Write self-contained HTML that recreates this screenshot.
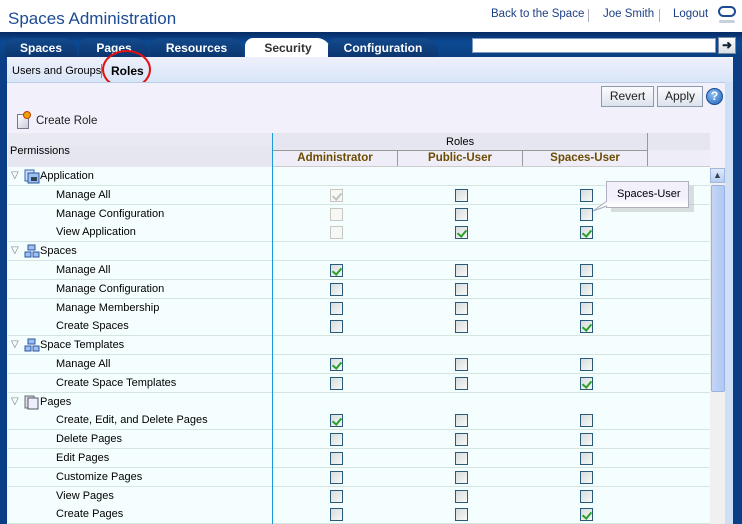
<!DOCTYPE html>
<html><head><meta charset="utf-8"><style>
*{margin:0;padding:0;box-sizing:border-box}
body{width:742px;height:524px;overflow:hidden;position:relative;background:#fff;font-family:"Liberation Sans",Tahoma,sans-serif;font-size:11px;color:#000}
.a{position:absolute}
.title{left:8px;top:9px;font-size:17px;color:#1c4b95}
.toplinks{top:8px;font-size:11.5px;color:#1c3f85}
.tabbar{left:0;top:32px;width:742px;height:25px;background:linear-gradient(#062c62,#0c4a94 40%,#0a3f80)}
.tab{top:38px;height:19px;background:linear-gradient(#134a8c,#0b3670);color:#fff;font-weight:bold;font-size:12px;text-align:center;line-height:20px;border-radius:8px 14px 0 0}
.tab.sel{background:#fff;color:#333}
.side{top:57px;height:467px;background:#0a3f88}
.sub{left:7px;top:57px;width:726px;height:25px;background:linear-gradient(#eef0fb,#d8e6f8);border-top-right-radius:6px}
.content{left:7px;top:82px;width:726px;height:442px;background:#f1f0fb;border-top:1px solid #b9cde6}
.btn{top:86px;height:21px;border:1px solid #8a9bb0;background:linear-gradient(#fafbfd,#dde3ec);font-size:12px;text-align:center;line-height:19px;color:#222}
.thead{left:8px;top:133px;width:702px;height:34px;background:#e6e6f0}
.row{left:8px;width:702px;height:19px;background:#f5fefe;border-bottom:1px solid #d4e4df;font-size:11px;line-height:18px}
.cb{width:13px;height:13px;border:1px solid #2a5a7a;background:linear-gradient(135deg,#d8dcdc,#f8f8f8)}
.cb.d{border-color:#c8c8c0;background:#f6f8f6}
.ck::after{content:"";position:absolute;left:3px;top:1px;width:4px;height:7px;border:solid #2aa02a;border-width:0 2px 2px 0;transform:rotate(40deg)}
.ck.d::after{border-color:#c0c4c0}
.tri{color:#777;font-size:10px}
</style></head><body>
<div class="a title">Spaces Administration</div>
<div class="a toplinks" style="left:491px">Back to the Space</div>
<div class="a" style="left:588px;top:9px;width:1px;height:13px;background:#aab"></div>
<div class="a toplinks" style="left:603px">Joe Smith</div>
<div class="a" style="left:659px;top:9px;width:1px;height:13px;background:#aab"></div>
<div class="a toplinks" style="left:673px">Logout</div>
<div class="a" style="left:718px;top:6px;width:18px;height:11px;border:2.5px solid #1c4b95;border-radius:8px"></div>
<div class="a" style="left:719px;top:20px;width:16px;height:3px;background:#c8d0e0;border-radius:3px"></div>

<div class="a tabbar"></div>
<div class="a tab" style="left:5px;width:72px">Spaces</div>
<div class="a tab" style="left:79px;width:70px">Pages</div>
<div class="a tab" style="left:150px;width:93px">Resources</div>
<div class="a tab sel" style="left:245px;width:86px">Security</div>
<div class="a tab" style="left:328px;width:110px">Configuration</div>
<div class="a" style="left:472px;top:38px;width:244px;height:15px;background:#fff;border:1px solid #7e9ac0"></div>
<div class="a" style="left:718px;top:37px;width:18px;height:17px;background:linear-gradient(#fff,#d8dde6);border:1px solid #7a8aa0;font-size:12px;font-weight:bold;text-align:center;line-height:14px;color:#123">➜</div>

<div class="a side" style="left:0;width:7px"></div>
<div class="a side" style="left:733px;width:9px"></div>
<div class="a sub"></div>
<div class="a" style="left:12px;top:65px;font-size:11px">Users and Groups</div>
<div class="a" style="left:101px;top:64px;width:1px;height:14px;background:#888"></div>
<div class="a" style="left:111px;top:64px;font-size:12px;font-weight:bold">Roles</div>
<div class="a" style="left:102px;top:50px;width:49px;height:39px;border:2px solid #e41010;border-radius:50%"></div>
<div class="a content"></div>
<div class="a" style="left:725px;top:82px;width:8px;height:442px;background:#cfdff5"></div>

<div class="a btn" style="left:601px;width:53px">Revert</div>
<div class="a btn" style="left:657px;width:46px">Apply</div>
<div class="a" style="left:706px;top:88px;width:17px;height:17px;border-radius:50%;background:radial-gradient(circle at 40% 35%,#8cc0f0,#1d62c0);border:1px solid #1a4a90;color:#fff;font-weight:bold;font-size:12px;text-align:center;line-height:15px">?</div>

<div class="a" style="left:17px;top:114px;width:12px;height:15px;border:1px solid #778;background:linear-gradient(135deg,#fff,#ccd)"></div>
<div class="a" style="left:23px;top:111px;width:8px;height:8px;border-radius:50%;background:#f0a000;border:1px solid #c04000"></div>
<div class="a" style="left:36px;top:115px;font-size:11.5px;color:#222">Create Role</div>

<div class="a thead"></div>
<div class="a" style="left:8px;top:133px;width:264px;height:13px;background:#e9e9f1"></div>
<div class="a" style="left:10px;top:145px;font-size:11px">Permissions</div>
<div class="a" style="left:272px;top:133px;width:1px;height:391px;background:#1a9ad8;z-index:3"></div>
<div class="a" style="left:273px;top:150px;width:437px;height:17px;background:#efeef8"></div>
<div class="a" style="left:273px;top:150px;width:374px;height:1px;background:#999"></div>
<div class="a" style="left:647px;top:133px;width:1px;height:34px;background:#999"></div>
<div class="a" style="left:397px;top:151px;width:1px;height:16px;background:#999"></div>
<div class="a" style="left:522px;top:151px;width:1px;height:16px;background:#999"></div>
<div class="a" style="left:273px;top:166px;width:437px;height:1px;background:#ccc"></div>
<div class="a" style="left:446px;top:136px;font-size:11px">Roles</div>
<div class="a" style="left:273px;top:152px;width:124px;text-align:center;font-weight:bold;color:#6b4c00;font-size:11.5px">Administrator</div>
<div class="a" style="left:398px;top:152px;width:124px;text-align:center;font-weight:bold;color:#6b4c00;font-size:11.5px">Public-User</div>
<div class="a" style="left:523px;top:152px;width:124px;text-align:center;font-weight:bold;color:#6b4c00;font-size:11.5px">Spaces-User</div>

<div class="a" style="left:8px;top:167px;width:702px;height:357px;overflow:hidden">
<div style="position:relative">
<div class="a row" style="left:0;top:0px"><span class="a tri" style="left:3px">▽</span><svg class="a" style="left:16px;top:2px" width="16" height="15"><rect x="1" y="1" width="9" height="11" fill="#cfe0ff" stroke="#3a64b0"/><rect x="4" y="4" width="11" height="10" fill="#9ec0f0" stroke="#2a54a0"/><rect x="7" y="8" width="6" height="4" fill="#345"/></svg><span class="a" style="left:32px">Application</span></div>
<div class="a row" style="left:0;top:18.8px"><span class="a" style="left:48px">Manage All</span><span class="a cb d ck" style="left:322px;top:3px"></span><span class="a cb" style="left:447px;top:3px"></span><span class="a cb" style="left:572px;top:3px"></span></div>
<div class="a row" style="left:0;top:37.6px"><span class="a" style="left:48px">Manage Configuration</span><span class="a cb d" style="left:322px;top:3px"></span><span class="a cb" style="left:447px;top:3px"></span><span class="a cb" style="left:572px;top:3px"></span></div>
<div class="a row" style="left:0;top:56.4px"><span class="a" style="left:48px">View Application</span><span class="a cb d" style="left:322px;top:3px"></span><span class="a cb ck" style="left:447px;top:3px"></span><span class="a cb ck" style="left:572px;top:3px"></span></div>
<div class="a row" style="left:0;top:75.2px"><span class="a tri" style="left:3px">▽</span><svg class="a" style="left:16px;top:2px" width="16" height="15"><rect x="4" y="1" width="7" height="5" fill="#9ec0f0" stroke="#2a54a0"/><rect x="1" y="8" width="6" height="5" fill="#9ec0f0" stroke="#2a54a0"/><rect x="9" y="8" width="6" height="5" fill="#9ec0f0" stroke="#2a54a0"/></svg><span class="a" style="left:32px">Spaces</span></div>
<div class="a row" style="left:0;top:94px"><span class="a" style="left:48px">Manage All</span><span class="a cb ck" style="left:322px;top:3px"></span><span class="a cb" style="left:447px;top:3px"></span><span class="a cb" style="left:572px;top:3px"></span></div>
<div class="a row" style="left:0;top:112.8px"><span class="a" style="left:48px">Manage Configuration</span><span class="a cb" style="left:322px;top:3px"></span><span class="a cb" style="left:447px;top:3px"></span><span class="a cb" style="left:572px;top:3px"></span></div>
<div class="a row" style="left:0;top:131.6px"><span class="a" style="left:48px">Manage Membership</span><span class="a cb" style="left:322px;top:3px"></span><span class="a cb" style="left:447px;top:3px"></span><span class="a cb" style="left:572px;top:3px"></span></div>
<div class="a row" style="left:0;top:150.4px"><span class="a" style="left:48px">Create Spaces</span><span class="a cb" style="left:322px;top:3px"></span><span class="a cb" style="left:447px;top:3px"></span><span class="a cb ck" style="left:572px;top:3px"></span></div>
<div class="a row" style="left:0;top:169.2px"><span class="a tri" style="left:3px">▽</span><svg class="a" style="left:16px;top:2px" width="16" height="15"><rect x="4" y="1" width="7" height="5" fill="#9ec0f0" stroke="#2a54a0"/><rect x="1" y="8" width="6" height="5" fill="#9ec0f0" stroke="#2a54a0"/><rect x="9" y="8" width="6" height="5" fill="#9ec0f0" stroke="#2a54a0"/></svg><span class="a" style="left:32px">Space Templates</span></div>
<div class="a row" style="left:0;top:188px"><span class="a" style="left:48px">Manage All</span><span class="a cb ck" style="left:322px;top:3px"></span><span class="a cb" style="left:447px;top:3px"></span><span class="a cb" style="left:572px;top:3px"></span></div>
<div class="a row" style="left:0;top:206.8px"><span class="a" style="left:48px">Create Space Templates</span><span class="a cb" style="left:322px;top:3px"></span><span class="a cb" style="left:447px;top:3px"></span><span class="a cb ck" style="left:572px;top:3px"></span></div>
<div class="a row" style="left:0;top:225.6px"><span class="a tri" style="left:3px">▽</span><svg class="a" style="left:16px;top:2px" width="16" height="15"><rect x="1" y="1" width="9" height="12" fill="#ddd" stroke="#667"/><rect x="4" y="3" width="10" height="11" fill="#eef" stroke="#556"/></svg><span class="a" style="left:32px">Pages</span></div>
<div class="a row" style="left:0;top:244.4px"><span class="a" style="left:48px">Create, Edit, and Delete Pages</span><span class="a cb ck" style="left:322px;top:3px"></span><span class="a cb" style="left:447px;top:3px"></span><span class="a cb" style="left:572px;top:3px"></span></div>
<div class="a row" style="left:0;top:263.2px"><span class="a" style="left:48px">Delete Pages</span><span class="a cb" style="left:322px;top:3px"></span><span class="a cb" style="left:447px;top:3px"></span><span class="a cb" style="left:572px;top:3px"></span></div>
<div class="a row" style="left:0;top:282px"><span class="a" style="left:48px">Edit Pages</span><span class="a cb" style="left:322px;top:3px"></span><span class="a cb" style="left:447px;top:3px"></span><span class="a cb" style="left:572px;top:3px"></span></div>
<div class="a row" style="left:0;top:300.8px"><span class="a" style="left:48px">Customize Pages</span><span class="a cb" style="left:322px;top:3px"></span><span class="a cb" style="left:447px;top:3px"></span><span class="a cb" style="left:572px;top:3px"></span></div>
<div class="a row" style="left:0;top:319.6px"><span class="a" style="left:48px">View Pages</span><span class="a cb" style="left:322px;top:3px"></span><span class="a cb" style="left:447px;top:3px"></span><span class="a cb" style="left:572px;top:3px"></span></div>
<div class="a row" style="left:0;top:338.4px"><span class="a" style="left:48px">Create Pages</span><span class="a cb" style="left:322px;top:3px"></span><span class="a cb" style="left:447px;top:3px"></span><span class="a cb ck" style="left:572px;top:3px"></span></div>
</div></div>

<div class="a" style="left:710px;top:167px;width:15px;height:357px;background:#f0f0f0"></div>
<div class="a" style="left:710px;top:168px;width:15px;height:15px;background:linear-gradient(#e0eafc,#b8cdf2);border:1px solid #a0b8e0;color:#345;font-size:9px;text-align:center;line-height:13px">▲</div>
<div class="a" style="left:711px;top:185px;width:14px;height:207px;background:linear-gradient(90deg,#c4d6f8,#b0c8f4);border:1px solid #9ab2e0;border-radius:2px"></div>

<div class="a" style="left:611px;top:186px;width:83px;height:26px;background:#bbb;opacity:.5"></div>
<div class="a" style="left:606px;top:181px;width:83px;height:27px;background:linear-gradient(#f2f0fb 60%,#fff);border:1px solid #b0b0c0;font-size:11px;line-height:25px;padding-left:10px">Spaces-User</div>
<svg class="a" style="left:592px;top:200px" width="16" height="12"><path d="M15 1 L1 11 L15 6" fill="#fafafa" stroke="#aab"/></svg>
</body></html>
